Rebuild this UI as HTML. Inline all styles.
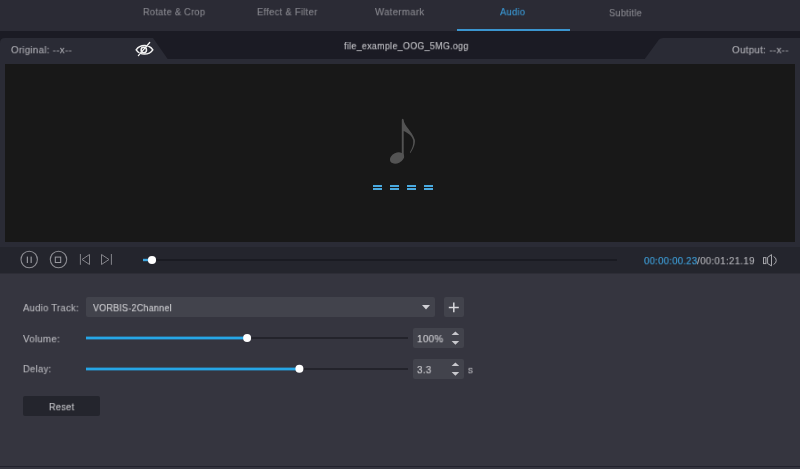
<!DOCTYPE html>
<html><head><meta charset="utf-8">
<style>
*{margin:0;padding:0;box-sizing:border-box}
html,body{width:800px;height:469px;overflow:hidden;background:#35353f;font-family:"Liberation Sans",sans-serif}
.abs{position:absolute}
#tabbar{left:0;top:0;width:800px;height:31px;background:#2b2b35}
.tab{top:0;height:31px;width:113px;text-align:center;font-size:10px;line-height:24px;color:#8a8a90}
.tab.on{color:#3fa2e0}
#ul{left:457px;top:29px;width:113px;height:2px;background:#3b95cf}
#strip{left:0;top:31px;width:800px;height:33px;background:#1b1b24}
#panel{left:0;top:59px;width:800px;height:188px;background:#2a2b35}
#video{left:5px;top:64px;width:790px;height:178px;background:#181818}
#ctrl{left:0;top:247px;width:800px;height:27px;background:#24252d;border-bottom:1px solid #2d2d36}
#bottom{left:0;top:274px;width:800px;height:195px;background:#35353f}
#bline{left:0;top:466px;width:800px;height:1px;background:#22222d}
.txt{white-space:nowrap;line-height:normal;transform-origin:0 0;will-change:transform;-webkit-text-stroke:0.12px currentColor}
.lbl{font-size:10px;color:#b8b8bd;white-space:nowrap}
</style></head><body>
<div id="tabbar" class="abs"></div>
<div id="ul" class="abs"></div>
<div id="strip" class="abs"></div>
<svg class="abs" style="left:0;top:38px" width="800" height="22">
  <path d="M0 5 Q0 0 5 0 L153 0 L168 21.5 L168 22 L0 22 Z" fill="#2a2b35"/>
  <path d="M663 0 L800 0 L800 22 L644 22 L659 1.5 Q660.5 0 663 0 Z" fill="#2a2b35"/>
</svg>
<div id="panel" class="abs"></div>
<div id="video" class="abs"></div>
<div id="ctrl" class="abs"></div>
<div id="bottom" class="abs"></div>
<div id="bline" class="abs"></div>


<!-- eye icon -->
<svg class="abs" style="left:134px;top:41px" width="22" height="18" viewBox="0 0 22 18">
  <path d="M2.2 8.8 C6 3.2 15 3.2 18.8 8.8 C15 14.4 6 14.4 2.2 8.8 Z" fill="none" stroke="#f2f2f2" stroke-width="1.5" stroke-linejoin="miter"/>
  <circle cx="9.8" cy="9" r="2.7" fill="none" stroke="#f2f2f2" stroke-width="1.5"/>
  <path d="M15.9 1.3 L13 4.6 M6.4 12.3 L4.2 14.8" stroke="#2a2b35" stroke-width="2.6"/>
  <path d="M15.7 1.5 L4.4 14.6" stroke="#f2f2f2" stroke-width="1.3" stroke-linecap="round"/>
</svg>

<!-- music note -->
<svg class="abs" style="left:380px;top:112px" width="44" height="58" viewBox="0 0 44 58">
  <ellipse cx="17" cy="46" rx="7.5" ry="5.2" transform="rotate(-25 17 46)" fill="#535353"/>
  <path d="M21.8 46 L21.8 7.8 Q22.6 5.8 23.6 7.8 C24 14 32 19 34.9 28 C35.3 33 33 37 30.4 40.9 L29.8 40.6 C32.6 36 33.6 32 33.2 28.5 C32.5 24 28 21 23.7 19 L23.7 46 Z" fill="#535353"/>
</svg>
<!-- equals -->
<div class="abs" style="left:373px;top:185px;width:9px;height:2px;background:#4aaae0"></div>
<div class="abs" style="left:373px;top:188px;width:9px;height:2px;background:#4aaae0"></div>
<div class="abs" style="left:390px;top:185px;width:9px;height:2px;background:#4aaae0"></div>
<div class="abs" style="left:390px;top:188px;width:9px;height:2px;background:#4aaae0"></div>
<div class="abs" style="left:407px;top:185px;width:9px;height:2px;background:#4aaae0"></div>
<div class="abs" style="left:407px;top:188px;width:9px;height:2px;background:#4aaae0"></div>
<div class="abs" style="left:424px;top:185px;width:9px;height:2px;background:#4aaae0"></div>
<div class="abs" style="left:424px;top:188px;width:9px;height:2px;background:#4aaae0"></div>

<!-- controls -->
<svg class="abs" style="left:0;top:247px" width="800" height="26">
  <circle cx="29.2" cy="12.5" r="8.2" fill="none" stroke="#8c8c92" stroke-width="1.1"/>
  <rect x="26.8" y="9.6" width="1.1" height="6.4" fill="#a0a0a6"/>
  <rect x="30.6" y="9.6" width="1.1" height="6.4" fill="#a0a0a6"/>
  <circle cx="58.5" cy="12.5" r="8.2" fill="none" stroke="#8c8c92" stroke-width="1.1"/>
  <rect x="55.3" y="10.1" width="5.4" height="5.4" fill="none" stroke="#9a9aa0" stroke-width="1"/>
  <path d="M80.4 7 V17.8 M89.5 7.5 L82 12.5 L89.5 17.5 Z" fill="none" stroke="#85858b" stroke-width="1"/>
  <path d="M111.4 7 V17.8 M101.5 7.5 L109 12.5 L101.5 17.5 Z" fill="none" stroke="#85858b" stroke-width="1"/>
  <rect x="143" y="12" width="474" height="2" fill="#1a1b22"/>
  <rect x="143" y="11.8" width="8" height="2.4" fill="#3fa6de"/>
  <circle cx="152" cy="13" r="4.1" fill="#ffffff"/>
</svg>
<svg class="abs" style="left:760px;top:252px" width="20" height="16" viewBox="0 0 20 16">
  <rect x="3.5" y="5.6" width="2.4" height="6" fill="none" stroke="#a8a8ad" stroke-width="1"/>
  <path d="M7.6 5.4 L11.5 2.6 L11.5 13.9 L7.6 11.5 Z" fill="none" stroke="#a8a8ad" stroke-width="1"/>
  <path d="M13.6 4.6 A4.2 4.2 0 0 1 13.6 12.4" fill="none" stroke="#a8a8ad" stroke-width="1"/>
</svg>

<!-- bottom panel -->
<div class="abs" style="left:86px;top:297px;width:349px;height:20px;background:#42434c;border-radius:2px"></div>
<svg class="abs" style="left:420px;top:303px" width="12" height="8"><path d="M2 2 L10 2 L6 6.5 Z" fill="#d0d0d5"/></svg>
<div class="abs" style="left:444px;top:297px;width:20px;height:20px;background:#42434c;border-radius:2px"></div>
<svg class="abs" style="left:444px;top:297px" width="20" height="20"><path d="M4.8 10.4 H14.8 M9.8 5.5 V15.3" stroke="#d8d8dc" stroke-width="1.5"/></svg>

<svg class="abs" style="left:85px;top:330px" width="330" height="16">
  <rect x="1" y="7" width="322" height="2" fill="#23232b"/>
  <rect x="1" y="6.6" width="161" height="2.8" fill="#26a6e6"/>
  <circle cx="162.1" cy="7.9" r="4" fill="#ffffff"/>
</svg>
<div class="abs" style="left:413px;top:328px;width:51px;height:20px;background:#42434c;border-radius:2px"></div>
<svg class="abs" style="left:448px;top:328px" width="14" height="20"><path d="M3.6 7 L7.4 3.5 L11.2 7 Z M3.6 13 L7.4 16.8 L11.2 13 Z" fill="#c8c8cd"/></svg>

<svg class="abs" style="left:85px;top:361px" width="330" height="16">
  <rect x="1" y="7" width="322" height="2" fill="#23232b"/>
  <rect x="1" y="6.6" width="213" height="2.8" fill="#26a6e6"/>
  <circle cx="214.4" cy="7.8" r="4" fill="#ffffff"/>
</svg>
<div class="abs" style="left:413px;top:359px;width:51px;height:20px;background:#42434c;border-radius:2px"></div>
<svg class="abs" style="left:448px;top:359px" width="14" height="20"><path d="M3.6 7 L7.4 3.5 L11.2 7 Z M3.6 13 L7.4 16.8 L11.2 13 Z" fill="#c8c8cd"/></svg>

<div class="abs" style="left:23px;top:396px;width:77px;height:20px;background:#24252d;border-radius:2px"></div>
<div class="abs txt" style="left:143.31px;top:7.27px;font-size:10px;color:#88888f;letter-spacing:0.35px;transform:scale(0.9173,0.92)">Rotate &amp; Crop</div>
<div class="abs txt" style="left:256.8px;top:7.27px;font-size:10px;color:#88888f;letter-spacing:0.35px;transform:scale(0.9297,0.92)">Effect &amp; Filter</div>
<div class="abs txt" style="left:375.25px;top:7.27px;font-size:10px;color:#88888f;letter-spacing:0.35px;transform:scale(0.9583,0.92)">Watermark</div>
<div class="abs txt" style="left:500.25px;top:7.27px;font-size:10px;color:#3b9bd8;letter-spacing:0.35px;transform:scale(0.9252,0.92)">Audio</div>
<div class="abs txt" style="left:609.47px;top:7.62px;font-size:10px;color:#88888f;letter-spacing:0.35px;transform:scale(0.9135,0.92)">Subtitle</div>
<div class="abs txt" style="left:11.26px;top:45.02px;font-size:10px;color:#adadb3;letter-spacing:0.35px;transform:scale(0.9594,0.92)">Original: --x--</div>
<div class="abs txt" style="left:344.2px;top:41.02px;font-size:10px;color:#c0c0c5;letter-spacing:0.35px;transform:scale(0.889,0.92)">file_example_OOG_5MG.ogg</div>
<div class="abs txt" style="left:732.36px;top:45.02px;font-size:10px;color:#adadb3;letter-spacing:0.35px;transform:scale(0.9722,0.92)">Output: --x--</div>
<div class="abs txt" style="left:643.51px;top:256.02px;font-size:10px;color:#40a5e2;letter-spacing:0.35px;transform:scale(0.9426,0.92)">00:00:00.23</div>
<div class="abs txt" style="left:697.0px;top:256.22px;font-size:10px;color:#b4b4b9;letter-spacing:0.35px;transform:scale(0.9661,0.92)">/00:01:21.19</div>
<div class="abs txt" style="left:23.1px;top:302.62px;font-size:10px;color:#b8b8bd;letter-spacing:0.35px;transform:scale(0.9362,0.92)">Audio Track:</div>
<div class="abs txt" style="left:93.1px;top:302.52px;font-size:10px;color:#d0d0d4;letter-spacing:0.35px;transform:scale(0.885,0.92)">VORBIS-2Channel</div>
<div class="abs txt" style="left:23.0px;top:333.52px;font-size:10px;color:#b8b8bd;letter-spacing:0.35px;transform:scale(0.96,0.92)">Volume:</div>
<div class="abs txt" style="left:416.97px;top:333.92px;font-size:10px;color:#d0d0d4;letter-spacing:0.35px;transform:scale(0.9786,0.92)">100%</div>
<div class="abs txt" style="left:22.6px;top:364.22px;font-size:10px;color:#b8b8bd;letter-spacing:0.35px;transform:scale(0.9368,0.92)">Delay:</div>
<div class="abs txt" style="left:417.46px;top:364.92px;font-size:10px;color:#d0d0d4;letter-spacing:0.35px;transform:scale(0.9714,0.92)">3.3</div>
<div class="abs txt" style="left:468.46px;top:364.62px;font-size:10px;color:#b8b8bd;letter-spacing:0.35px;transform:scale(0.9778,0.92)">s</div>
<div class="abs txt" style="left:48.72px;top:402.02px;font-size:10px;color:#c5c5c9;letter-spacing:0.35px;transform:scale(0.9103,0.92)">Reset</div>
</body></html>
